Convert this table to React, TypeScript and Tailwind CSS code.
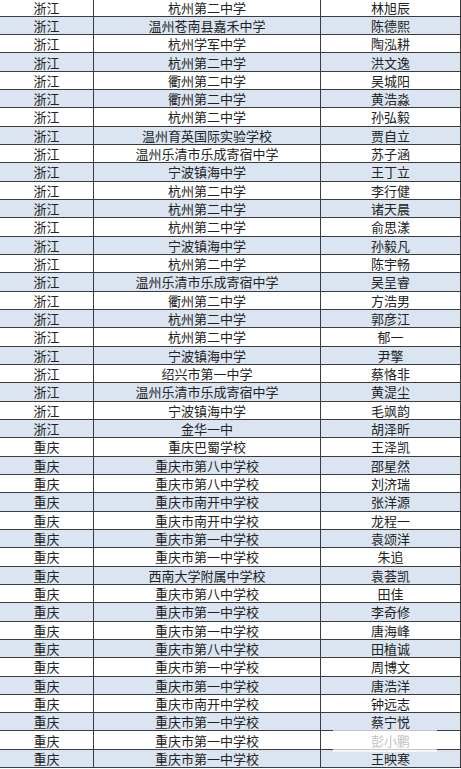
import React from 'react';

const rows: [string, string, string][] = [
  ['浙江', '杭州第二中学', '林旭辰'],
  ['浙江', '温州苍南县嘉禾中学', '陈德熙'],
  ['浙江', '杭州学军中学', '陶泓耕'],
  ['浙江', '杭州第二中学', '洪文逸'],
  ['浙江', '衢州第二中学', '吴城阳'],
  ['浙江', '衢州第二中学', '黄浩淼'],
  ['浙江', '杭州第二中学', '孙弘毅'],
  ['浙江', '温州育英国际实验学校', '贾自立'],
  ['浙江', '温州乐清市乐成寄宿中学', '苏子涵'],
  ['浙江', '宁波镇海中学', '王丁立'],
  ['浙江', '杭州第二中学', '李行健'],
  ['浙江', '杭州第二中学', '诸天晨'],
  ['浙江', '杭州第二中学', '俞思漾'],
  ['浙江', '宁波镇海中学', '孙毅凡'],
  ['浙江', '杭州第二中学', '陈宇畅'],
  ['浙江', '温州乐清市乐成寄宿中学', '吴呈睿'],
  ['浙江', '衢州第二中学', '方浩男'],
  ['浙江', '杭州第二中学', '郭彦江'],
  ['浙江', '杭州第二中学', '郁一'],
  ['浙江', '宁波镇海中学', '尹擎'],
  ['浙江', '绍兴市第一中学', '蔡恪非'],
  ['浙江', '温州乐清市乐成寄宿中学', '黄湜尘'],
  ['浙江', '宁波镇海中学', '毛飒韵'],
  ['浙江', '金华一中', '胡泽昕'],
  ['重庆', '重庆巴蜀学校', '王泽凯'],
  ['重庆', '重庆市第八中学校', '邵星然'],
  ['重庆', '重庆市第八中学校', '刘济瑞'],
  ['重庆', '重庆市南开中学校', '张洋源'],
  ['重庆', '重庆市南开中学校', '龙程一'],
  ['重庆', '重庆市第一中学校', '袁颂洋'],
  ['重庆', '重庆市第一中学校', '朱追'],
  ['重庆', '西南大学附属中学校', '袁荟凯'],
  ['重庆', '重庆市第八中学校', '田佳'],
  ['重庆', '重庆市第一中学校', '李奇修'],
  ['重庆', '重庆市第一中学校', '唐海峰'],
  ['重庆', '重庆市第八中学校', '田植诚'],
  ['重庆', '重庆市第一中学校', '周博文'],
  ['重庆', '重庆市第一中学校', '唐浩洋'],
  ['重庆', '重庆市南开中学校', '钟远志'],
  ['重庆', '重庆市第一中学校', '蔡宁悦'],
  ['重庆', '重庆市第一中学校', '彭小鹏'],
  ['重庆', '重庆市第一中学校', '王映寒'],
];

export default function App() {
  return (
    <div
      className="relative w-[461px] h-[769px] overflow-hidden bg-white text-[13px] text-[#222]"
      style={{ fontFamily: '"Microsoft YaHei", "Noto Sans CJK SC", sans-serif' }}
    >
      {rows.map((r, i) => (
        <div
          key={i}
          className={`flex border-b border-[#3c3c3c] leading-none ${i === 0 ? 'h-[16.7px]' : 'h-[18.33px]'} ${i % 2 === 1 ? 'bg-[#dbe5f1]' : 'bg-white'}`}
        >
          <div className="w-[94px] flex items-center justify-center border-r border-[#3c3c3c]">{r[0]}</div>
          <div className="w-[227px] flex items-center justify-center border-r border-[#3c3c3c]">{r[1]}</div>
          <div className="w-[140px] flex items-center justify-center border-r border-[#3c3c3c]">{r[2]}</div>
        </div>
      ))}
      {/* watermark */}
      <div className="absolute left-[333px] top-[730px] w-[104px] h-[22px] bg-white/70" />
    </div>
  );
}
